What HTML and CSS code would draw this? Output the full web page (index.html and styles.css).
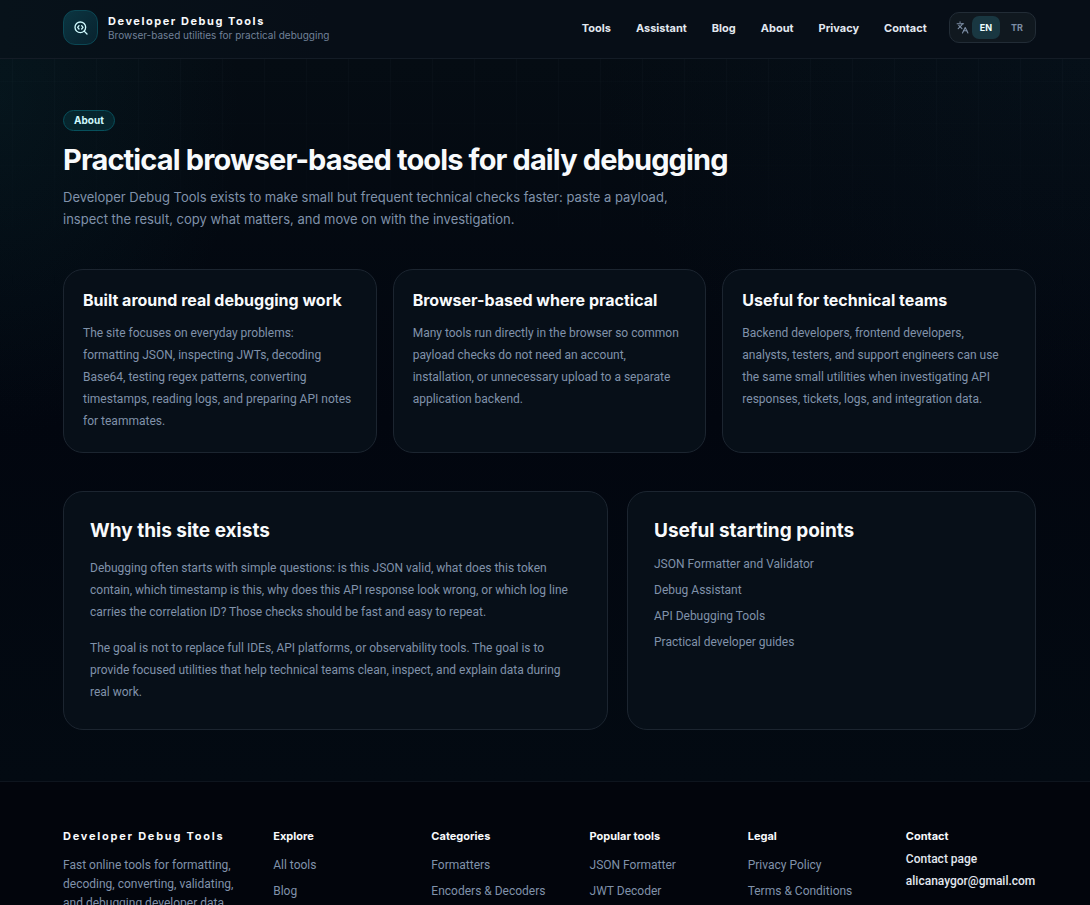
FILE: index.html
```html
<!DOCTYPE html>
<html lang="en">
<head>
<meta charset="utf-8">
<meta name="viewport" content="width=device-width, initial-scale=1">
<title>About | Developer Debug Tools</title>
<link rel="stylesheet" href="styles.css">
</head>
<body>
<header class="site-header">
  <div class="container header-row">
    <a class="brand" href="#">
      <span class="brand-mark">
        <svg width="16" height="16" viewBox="0 0 24 24" fill="none" stroke="currentColor" stroke-width="2" stroke-linecap="round" stroke-linejoin="round" aria-hidden="true"><path d="m13 13.500 2-2.500-2-2.500"/><path d="m21 21-4.300-4.300"/><path d="M9 8.500 7 11l2 2.500"/><circle cx="11" cy="11" r="8"/></svg>
      </span>
      <span class="brand-text">
        <span class="brand-name">Developer Debug Tools</span>
        <span class="brand-tagline">Browser-based utilities for practical debugging</span>
      </span>
    </a>
    <div class="header-actions">
      <nav class="main-nav" aria-label="Main">
        <a href="#">Tools</a>
        <a href="#">Assistant</a>
        <a href="#">Blog</a>
        <a href="#">About</a>
        <a href="#">Privacy</a>
        <a href="#">Contact</a>
      </nav>
      <div class="language" role="group" aria-label="Language">
        <svg class="language-icon" width="13" height="13" viewBox="0 0 24 24" fill="none" stroke="currentColor" stroke-width="2" stroke-linecap="round" stroke-linejoin="round" aria-hidden="true"><path d="m5 8 6 6"/><path d="m4 14 6-6 2-3"/><path d="M2 5h12"/><path d="M7 2h1"/><path d="m22 22-5-10-5 10"/><path d="M14 18h6"/></svg>
        <button class="language-option is-active" type="button" aria-pressed="true">EN</button>
        <button class="language-option" type="button" aria-pressed="false">TR</button>
      </div>
    </div>
  </div>
</header>

<main class="page">
  <div class="container">
    <section class="intro">
      <span class="badge">About</span>
      <h1>Practical browser-based tools for daily debugging</h1>
      <p>Developer Debug Tools exists to make small but frequent technical checks faster: paste a payload, inspect the result, copy what matters, and move on with the investigation.</p>
    </section>

    <section class="cards">
      <article class="card">
        <h2>Built around real debugging work</h2>
        <p>The site focuses on everyday problems:<br>formatting JSON, inspecting JWTs, decoding Base64, testing regex patterns, converting timestamps, reading logs, and preparing API notes for teammates.</p>
      </article>
      <article class="card">
        <h2>Browser-based where practical</h2>
        <p>Many tools run directly in the browser so common payload checks do not need an account, installation, or unnecessary upload to a separate application backend.</p>
      </article>
      <article class="card">
        <h2>Useful for technical teams</h2>
        <p>Backend developers, frontend developers,<br>analysts, testers, and support engineers can use the same small utilities when investigating API responses, tickets, logs, and integration data.</p>
      </article>
    </section>

    <section class="panels">
      <article class="panel">
        <h2>Why this site exists</h2>
        <div class="panel-copy">
          <p>Debugging often starts with simple questions: is this JSON valid, what does this token contain, which timestamp is this, why does this API response look wrong, or which log line carries the correlation ID? Those checks should be fast and easy to repeat.</p>
          <p>The goal is not to replace full IDEs, API platforms, or observability tools. The goal is to provide focused utilities that help technical teams clean, inspect, and explain data during real work.</p>
        </div>
      </article>
      <article class="panel">
        <h2>Useful starting points</h2>
        <ul class="link-list">
          <li><a href="#">JSON Formatter and Validator</a></li>
          <li><a href="#">Debug Assistant</a></li>
          <li><a href="#">API Debugging Tools</a></li>
          <li><a href="#">Practical developer guides</a></li>
        </ul>
      </article>
    </section>
  </div>
</main>

<footer class="site-footer">
  <div class="container footer-grid">
    <div class="footer-about">
      <p class="footer-brand">Developer Debug Tools</p>
      <p class="footer-copy">Fast online tools for formatting, decoding, converting, validating, and debugging developer data.</p>
    </div>
    <nav aria-labelledby="footer-explore">
      <h2 id="footer-explore">Explore</h2>
      <ul class="link-list"><li><a href="#">All tools</a></li><li><a href="#">Blog</a></li></ul>
    </nav>
    <nav aria-labelledby="footer-categories">
      <h2 id="footer-categories">Categories</h2>
      <ul class="link-list"><li><a href="#">Formatters</a></li><li><a href="#">Encoders &amp; Decoders</a></li></ul>
    </nav>
    <nav aria-labelledby="footer-popular">
      <h2 id="footer-popular">Popular tools</h2>
      <ul class="link-list"><li><a href="#">JSON Formatter</a></li><li><a href="#">JWT Decoder</a></li></ul>
    </nav>
    <nav aria-labelledby="footer-legal">
      <h2 id="footer-legal">Legal</h2>
      <ul class="link-list"><li><a href="#">Privacy Policy</a></li><li><a href="#">Terms &amp; Conditions</a></li></ul>
    </nav>
    <div>
      <h2>Contact</h2>
      <ul class="contact-list"><li><a href="#">Contact page</a></li><li><a href="mailto:alicanaygor@gmail.com">alicanaygor@gmail.com</a></li></ul>
    </div>
  </div>
</footer>
</body>
</html>
```

FILE: styles.css
```css
:root {
  --text: #f8fafc;
  --muted: #8092aa;
  --line: #1c2530;
  --surface: #070f18;
  --heading: Inter, sans-serif;
  --copy: Roboto, sans-serif;
}

*, *::before, *::after { box-sizing: border-box; }

html { overflow: hidden; height: 100%; }

body {
  margin: 0;
  height: 100%;
  overflow: hidden;
  background: #02060d;
  color: var(--text);
  font-family: var(--heading);
  font-size: 12px;
  line-height: 22px;
}

h1, h2, p, ul { margin: 0; padding: 0; }
ul { list-style: none; }
a { color: inherit; text-decoration: none; }
button { font: inherit; }

.container {
  max-width: 1024px;
  margin: 0 auto;
  padding: 0 21px 0 30px;
}

.site-header {
  background: linear-gradient(90deg, #07121a, #070e17 30%);
  border-bottom: 1px solid #141c26;
}

.header-row {
  display: flex;
  align-items: center;
  justify-content: space-between;
  padding-top: 10px;
  padding-bottom: 13px;
}

.brand { display: flex; align-items: center; gap: 10px; }

.brand-mark {
  display: flex;
  align-items: center;
  justify-content: center;
  width: 35px;
  height: 35px;
  border: 1px solid #0b4754;
  border-radius: 12px;
  background: linear-gradient(135deg, #0b3541, #08222e);
  color: #cffafe;
}

.brand-text { display: flex; flex-direction: column; }

.brand-name {
  font-size: 11px;
  font-weight: 700;
  line-height: 15px;
  letter-spacing: 0.14em;
}

.brand-tagline {
  color: #718198;
  font-size: 10px;
  line-height: 12px;
}

.header-actions { display: flex; align-items: center; gap: 22px; }

.main-nav {
  display: flex;
  gap: 25px;
  color: #e2e8f0;
  font-size: 11px;
  font-weight: 700;
}

.language {
  display: flex;
  align-items: center;
  gap: 3px;
  height: 31px;
  padding: 3px 4px 3px 6px;
  border: 1px solid #222c36;
  border-radius: 10px;
  background: #10181f;
  color: #7f90a8;
}

.language-option {
  height: 23px;
  padding: 0 8px;
  border: 0;
  border-radius: 7px;
  background: transparent;
  color: #7c8da5;
  font-size: 9px;
  font-weight: 700;
}

.language-option.is-active { background: #193741; color: #ecfeff; }

.page {
  position: relative;
  padding: 51px 0;
  background:
    radial-gradient(ellipse 240px 340px at 0 40px, rgba(12, 80, 88, 0.14), transparent),
    radial-gradient(ellipse 500px 400px at 100% 0, rgba(12, 44, 66, 0.12), transparent),
    linear-gradient(#050c13, #02060f 50%, #030a12);
}

.page::before {
  content: "";
  position: absolute;
  inset: 0;
  background:
    linear-gradient(90deg, rgba(148, 163, 184, 0.03) 1px, transparent 1px) 12px 0 / 42px 42px,
    linear-gradient(rgba(148, 163, 184, 0.02) 1px, transparent 1px) 0 22px / 42px 42px;
  -webkit-mask-image: linear-gradient(#000, transparent 240px);
  mask-image: linear-gradient(#000, transparent 240px);
  pointer-events: none;
}

.intro {
  display: flex;
  flex-direction: column;
  align-items: flex-start;
}

.badge {
  padding: 0 10px;
  border: 1px solid #07505c;
  border-radius: 11px;
  background: #06252d;
  color: #cffafe;
  font-size: 10px;
  font-weight: 700;
  line-height: 19px;
}

.intro h1 {
  margin-top: 10px;
  font-size: 29px;
  font-weight: 700;
  line-height: 38px;
  letter-spacing: -0.03em;
}

.intro p {
  max-width: 640px;
  margin-top: 7px;
  color: var(--muted);
  font-size: 13px;
  line-height: 22px;
}

.cards {
  display: grid;
  grid-template-columns: repeat(3, 1fr);
  gap: 16px;
  margin-top: 39px;
}

.card, .panel {
  position: relative;
  border: 1px solid var(--line);
  border-radius: 20px;
  background: var(--surface);
}

.card { padding: 19px 19px 20px; }

.card h2 {
  font-size: 16px;
  font-weight: 700;
  line-height: 22px;
}

.card p {
  margin-top: 11px;
  color: var(--muted);
  font-family: var(--copy);
}

.panels {
  display: grid;
  grid-template-columns: 545fr 409fr;
  gap: 19px;
  margin-top: 38px;
}

.panel { padding: 26px; }

.panel h2 {
  font-size: 19px;
  font-weight: 700;
  line-height: 26px;
}

.panel-copy {
  display: grid;
  gap: 14px;
  margin-top: 13px;
  color: var(--muted);
  font-family: var(--copy);
}

.link-list {
  display: grid;
  gap: 10px;
  color: var(--muted);
  font-family: var(--copy);
  line-height: 16px;
}

.panel .link-list { margin-top: 12px; }

.site-footer {
  padding: 45px 0;
  border-top: 1px solid #0e151e;
  background: #02050c;
}

.footer-grid {
  display: grid;
  grid-template-columns: 178fr repeat(4, 126fr) 130fr;
  gap: 32px;
}

.footer-grid h2, .footer-brand {
  font-size: 11px;
  font-weight: 700;
  line-height: 18px;
}

.footer-brand { letter-spacing: 0.16em; white-space: nowrap; }

.footer-copy {
  margin-top: 11px;
  color: var(--muted);
  font-family: var(--copy);
  font-size: 12px;
  line-height: 19px;
}

.footer-grid .link-list { margin-top: 12px; }

.contact-list {
  display: grid;
  gap: 6px;
  margin-top: 6px;
  color: #e2e8f0;
  font-family: var(--copy);
  font-weight: 500;
  line-height: 16px;
}

@media (max-width: 800px) {
  .header-row { flex-wrap: wrap; gap: 12px; }
  .cards, .panels { grid-template-columns: 1fr; }
  .footer-grid { grid-template-columns: repeat(2, 1fr); }
  html, body { height: auto; overflow: visible; }
}
```
